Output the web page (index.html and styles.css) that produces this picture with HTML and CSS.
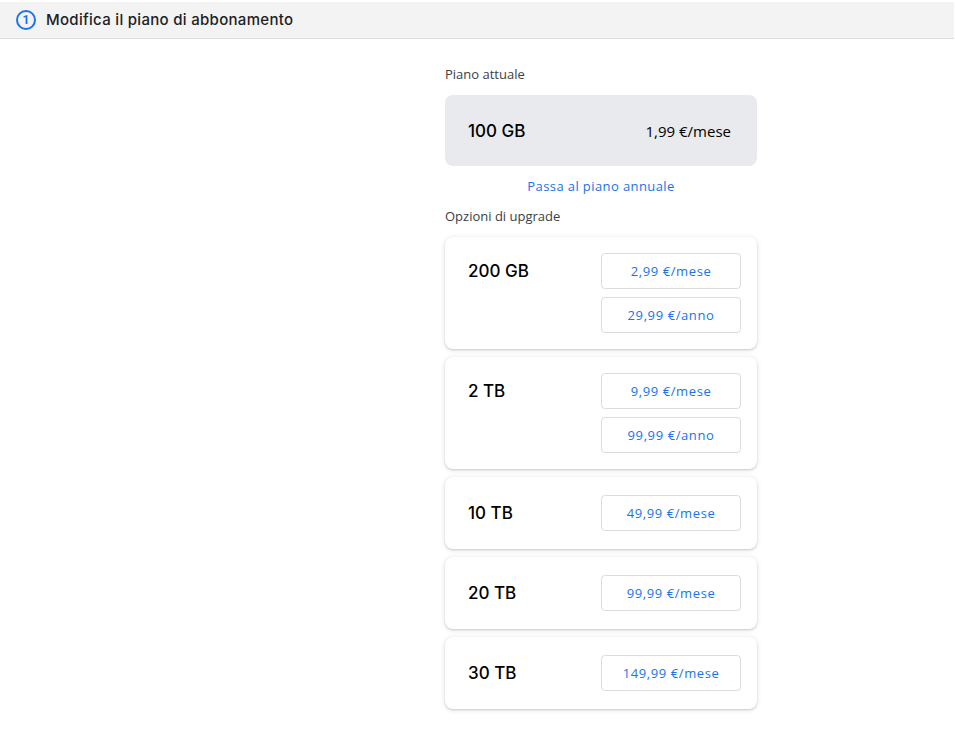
FILE: index.html
```html
<!DOCTYPE html>
<html lang="it">

<head>
    <meta charset="UTF-8">
    <meta name="viewport" content="width=device-width, initial-scale=1.0">
    <title>Modifica il piano di abbonamento</title>
    <link rel="stylesheet" href="styles.css">
</head>

<body>
    <div class="step-bar">
        <span class="step-num">1</span>
        <span class="step-title">Modifica il piano di abbonamento</span>
    </div>

    <div class="plans">
        <div class="section-label">Piano attuale</div>

        <div class="current-plan">
            <span class="plan-size">100 GB</span>
            <span class="current-price">1,99 €/mese</span>
        </div>

        <a class="annual-link" href="#">Passa al piano annuale</a>

        <div class="section-label upgrade-label">Opzioni di upgrade</div>

        <div class="plan-card">
            <span class="plan-size">200 GB</span>
            <div class="prices">
                <button class="price-btn">2,99 €/mese</button>
                <button class="price-btn">29,99 €/anno</button>
            </div>
        </div>

        <div class="plan-card">
            <span class="plan-size">2 TB</span>
            <div class="prices">
                <button class="price-btn">9,99 €/mese</button>
                <button class="price-btn">99,99 €/anno</button>
            </div>
        </div>

        <div class="plan-card single">
            <span class="plan-size">10 TB</span>
            <div class="prices">
                <button class="price-btn">49,99 €/mese</button>
            </div>
        </div>

        <div class="plan-card single">
            <span class="plan-size">20 TB</span>
            <div class="prices">
                <button class="price-btn">99,99 €/mese</button>
            </div>
        </div>

        <div class="plan-card single">
            <span class="plan-size">30 TB</span>
            <div class="prices">
                <button class="price-btn">149,99 €/mese</button>
            </div>
        </div>
    </div>
</body>

</html>
```

FILE: styles.css
```css
body {
    margin: 0;
    padding-top: 2px;
    font-family: "Open Sans", Roboto, "Liberation Sans", sans-serif;
    color: #202124;
    background: #fff;
}

/* top step header */
.step-bar {
    display: flex;
    align-items: center;
    height: 35px;
    margin-right: 1px;
    padding: 0 0 1px 16px;
    background: #f3f3f3;
    border-bottom: 1px solid #dadce0;
}

.step-num {
    display: flex;
    align-items: center;
    justify-content: center;
    box-sizing: border-box;
    width: 20px;
    height: 20px;
    border: 2px solid #1a73e8;
    border-radius: 50%;
    color: #1a73e8;
    font-family: Roboto, sans-serif;
    font-size: 12px;
    font-weight: 700;
    margin-right: 10px;
}

.step-title {
    font-family: Inter, "Open Sans", sans-serif;
    font-size: 15px;
    font-weight: 500;
    line-height: 20px;
    letter-spacing: 0.3px;
    color: #202124;
}

/* plans column */
.plans {
    width: 312px;
    margin: 27px 0 0 445px;
    display: flex;
    flex-direction: column;
}

.section-label {
    font-size: 13px;
    line-height: 16px;
    color: #3c4043;
    margin-bottom: 13px;
}

.current-plan {
    display: flex;
    justify-content: space-between;
    align-items: center;
    height: 71px;
    padding: 0 26px 0 23px;
    background: #e8eaed;
    border-radius: 8px;
}

.plan-size {
    font-family: Inter, "Open Sans", sans-serif;
    font-size: 17px;
    font-weight: 500;
    color: #000;
}

.current-price {
    font-size: 15px;
    color: #000;
}

.annual-link {
    align-self: center;
    margin: 12px 0 14px;
    font-size: 13px;
    font-weight: 500;
    line-height: 16px;
    letter-spacing: 0.4px;
    color: #1a73e8;
    text-decoration: none;
}

.plan-card {
    display: flex;
    justify-content: space-between;
    padding: 16px 16px 16px 23px;
    margin-bottom: 8px;
    background: #fff;
    border-radius: 8px;
    box-shadow: 0 1px 2px rgba(60, 64, 67, 0.2), 0 1px 4px 1px rgba(60, 64, 67, 0.1);
}

.plan-card.single {
    padding-top: 18px;
    padding-bottom: 18px;
}

.plan-card .plan-size {
    line-height: 36px;
}

.prices {
    display: flex;
    flex-direction: column;
    gap: 8px;
}

.price-btn {
    width: 140px;
    height: 36px;
    background: #fff;
    border: 1px solid #dadce0;
    border-radius: 4px;
    font-family: "Open Sans", Roboto, sans-serif;
    font-size: 13px;
    letter-spacing: 0.6px;
    color: #1a73e8;
    cursor: pointer;
}
```
